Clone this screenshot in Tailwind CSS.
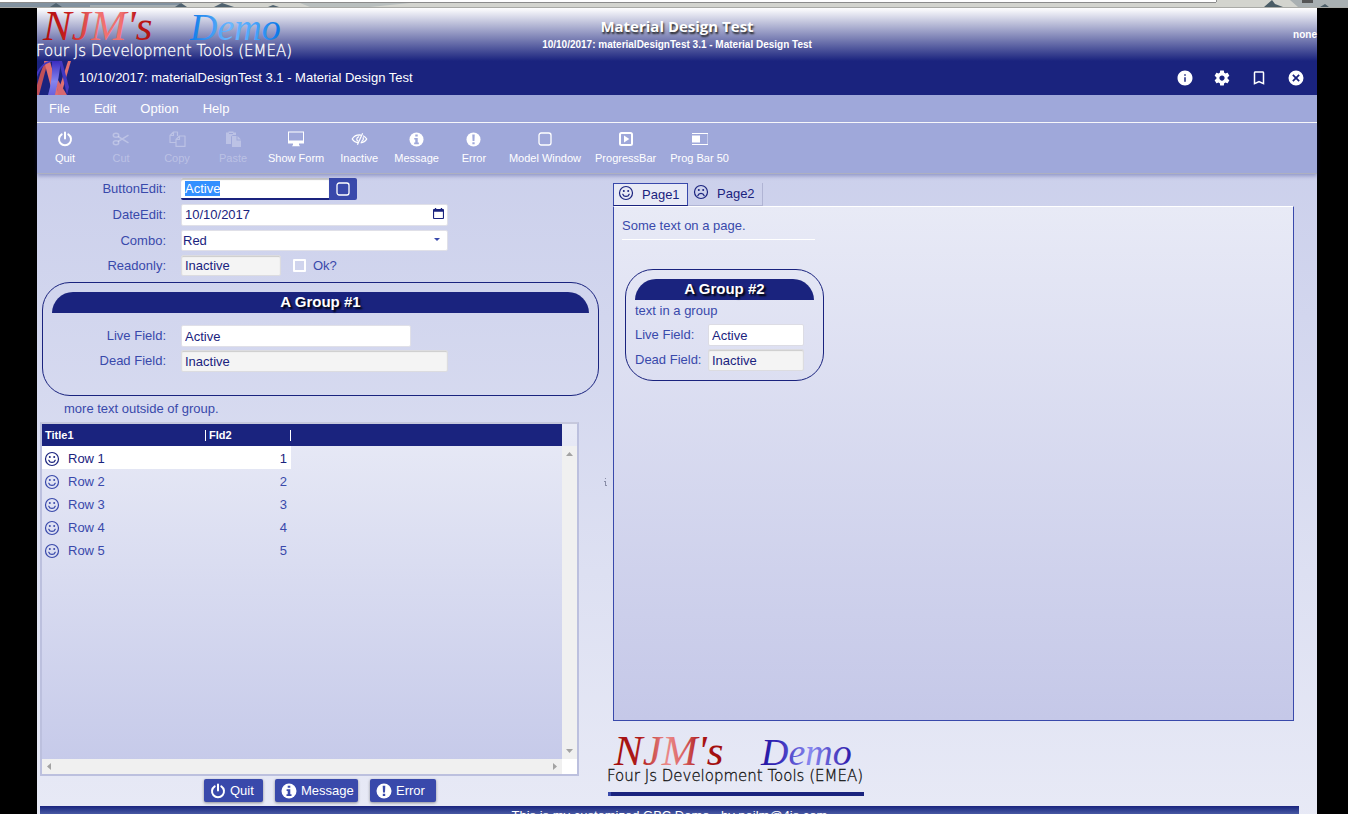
<!DOCTYPE html>
<html lang="en">
<head>
<meta charset="utf-8">
<title>Material Design Test</title>
<script src="https://cdn.jsdelivr.net/npm/@tailwindcss/browser@4"></script>
</head>
<body class="flex h-screen flex-col overflow-hidden bg-black font-['Liberation_Sans',Arial,sans-serif] text-[13px] leading-4 text-[#3949ab]">
<svg class="absolute size-0" aria-hidden="true">
  <defs>
    <linearGradient id="redA" x1="0" x2="1"><stop offset="0" stop-color="#b00c0c"/><stop offset=".25" stop-color="#c82020"/><stop offset=".5" stop-color="#f07070"/><stop offset=".72" stop-color="#f07070"/><stop offset=".85" stop-color="#c01818"/><stop offset="1" stop-color="#b01010"/></linearGradient>
    <linearGradient id="blueA" x1="0" x2="1"><stop offset="0" stop-color="#0a78e8"/><stop offset=".45" stop-color="#6cb8ff"/><stop offset=".7" stop-color="#4aa6fb"/><stop offset="1" stop-color="#0674e6"/></linearGradient>
    <linearGradient id="redB" x1="0" x2="1"><stop offset="0" stop-color="#a00c0c"/><stop offset=".25" stop-color="#b01c1c"/><stop offset=".48" stop-color="#ec8a8a"/><stop offset=".65" stop-color="#d86060"/><stop offset=".8" stop-color="#a81414"/><stop offset="1" stop-color="#a00c0c"/></linearGradient>
    <linearGradient id="blueB" x1="0" x2="1"><stop offset="0" stop-color="#2414a0"/><stop offset=".2" stop-color="#3428b8"/><stop offset=".55" stop-color="#8888f0"/><stop offset="1" stop-color="#2c18a8"/></linearGradient>
    <linearGradient id="ribbon" x1="0" x2="0" y1="0" y2="1"><stop offset="0" stop-color="#3a2cc0"/><stop offset=".6" stop-color="#8484ee"/><stop offset="1" stop-color="#6a62dc"/></linearGradient>
  </defs>
  <symbol id="info" viewBox="0 0 24 24"><path fill="currentColor" d="M12 2C6.48 2 2 6.48 2 12s4.48 10 10 10 10-4.48 10-10S17.52 2 12 2zm1 15h-2v-6h2v6zm0-8h-2V7h2v2z"/></symbol>
  <symbol id="gear" viewBox="0 0 24 24"><path fill="currentColor" d="M19.43 12.98c.04-.32.07-.64.07-.98s-.03-.66-.07-.98l2.11-1.65c.19-.15.24-.42.12-.64l-2-3.46c-.12-.22-.39-.3-.61-.22l-2.49 1c-.52-.4-1.08-.73-1.69-.98l-.38-2.65C14.46 2.18 14.25 2 14 2h-4c-.25 0-.46.18-.49.42l-.38 2.65c-.61.25-1.17.59-1.69.98l-2.49-1c-.23-.09-.49 0-.61.22l-2 3.46c-.13.22-.07.49.12.64l2.11 1.65c-.04.32-.07.65-.07.98s.03.66.07.98l-2.11 1.65c-.19.15-.24.42-.12.64l2 3.46c.12.22.39.3.61.22l2.49-1c.52.4 1.08.73 1.69.98l.38 2.65c.03.24.24.42.49.42h4c.25 0 .46-.18.49-.42l.38-2.65c.61-.25 1.17-.59 1.69-.98l2.49 1c.23.09.49 0 .61-.22l2-3.46c.12-.22.07-.49-.12-.64l-2.11-1.65zM12 15.500c-1.930 0-3.500-1.570-3.500-3.500s1.570-3.500 3.500-3.500 3.500 1.570 3.500 3.500-1.570 3.500-3.500 3.500z"/></symbol>
  <symbol id="bookmark" viewBox="0 0 24 24"><path fill="currentColor" d="M17 3H7c-1.100 0-2 .9-2 2v16l7-3 7 3V5c0-1.100-.9-2-2-2zm0 15l-5-2.180L7 18V5h10v13z"/></symbol>
  <symbol id="cancel" viewBox="0 0 24 24"><path fill="currentColor" fill-rule="evenodd" d="M12 2a10 10 0 1 0 0 20 10 10 0 0 0 0-20zM7 8.600 8.600 7 12 10.300 15.400 7 17 8.600 13.700 12 17 15.400 15.400 17 12 13.700 8.600 17 7 15.400 10.300 12z"/></symbol>
  <symbol id="power" viewBox="0 0 16 16"><path fill="none" stroke="currentColor" stroke-width="2" stroke-linecap="round" d="M4.700 3.300a6 6 0 1 0 6.600 0M8 1.500v6"/></symbol>
  <symbol id="cut" viewBox="0 0 18 16"><g fill="none" stroke="currentColor" stroke-width="1.500"><ellipse cx="4" cy="4.300" rx="2.700" ry="2"/><ellipse cx="4" cy="11.700" rx="2.700" ry="2"/><path d="m6 5.500 10.500 6.300M6 10.500l10.500-6.300"/></g></symbol>
  <symbol id="copy" viewBox="0 0 17 16"><path fill="none" stroke="currentColor" stroke-width="1.200" stroke-linejoin="round" d="M6.500 11.500H1V4.500L4.500 1h4v4M4.500 1v3.500H1M7 8.500 10.500 5h5.500v10.400H7zM10.500 5v3.500H7"/></symbol>
  <symbol id="paste" viewBox="0 0 17 16"><path fill="currentColor" fill-rule="evenodd" d="M1 1.500h2.500V.5h5v1H11V4H8.500C7 4 6 5 6 6.500V13H1zM4 2v1h4V2zM7 5h4.500v4.500H16V16H7zM12.500 5 16 8.500h-3.500z"/></symbol>
  <symbol id="desktop" viewBox="0 0 18 16"><path fill="currentColor" fill-rule="evenodd" d="M1 .5h16v12H1zM2 1.500v8h14v-8zM6 12.500h6v1.200l1 1.500H5l1-1.500z"/></symbol>
  <symbol id="eyeoff" viewBox="0 0 18 14"><g fill="none" stroke="currentColor" stroke-width="1.300"><path d="M7.500 11.200C4.500 10.500 2.300 8.800 1.300 7c1.700-2.800 4.500-4.300 7.700-4.300l1.500.2M12.800 3.600c1.700.8 3 2 3.900 3.400-1.400 2.300-3.700 3.800-6.500 4.200M12.300 1 6.800 13"/><path d="M7.800 9.500C5.500 8.500 5.300 5.500 8.500 4.500M12.800 5.200c.6 2-.3 3.800-2 4.400"/></g></symbol>
  <symbol id="infoB" viewBox="0 0 16 16"><circle cx="8" cy="8" r="7.500" fill="currentColor"/><path fill="var(--hole)" d="M6.700 2.700h2.600v2H6.700zM5.600 6.300h3.700v5h1.200V13h-5v-1.700h1.200V8H5.600z"/></symbol>
  <symbol id="excl" viewBox="0 0 16 16"><circle cx="8" cy="8" r="7.500" fill="currentColor"/><path fill="var(--hole)" d="M6.700 2.700h2.600L9 9.500H7zM6.800 10.800h2.400v2.300H6.800z"/></symbol>
  <symbol id="square" viewBox="0 0 14 14"><rect x="1" y="1" width="12" height="12" rx="2.200" fill="none" stroke="currentColor" stroke-width="1.300"/></symbol>
  <symbol id="play" viewBox="0 0 14 14"><rect x="1" y="1" width="12" height="12" rx="1.500" fill="none" stroke="currentColor" stroke-width="2"/><path fill="currentColor" d="M5 3.500v7L10.300 7z"/></symbol>
  <symbol id="bar50" viewBox="0 0 16 12"><path fill="currentColor" d="M0 0h16v1H0zM0 11h16v1H0zM0 2.500h8v7H0z"/><path fill="currentColor" opacity=".4" d="M15 1h1v10h-1z"/></symbol>
  <symbol id="smile" viewBox="0 0 16 16"><g fill="none" stroke="currentColor" stroke-width="1.200"><circle cx="8" cy="8" r="6.500"/><path d="M4.800 9.200c1 3 5.400 3 6.400 0" stroke-linecap="round"/></g><circle cx="5.800" cy="6" r="1" fill="currentColor"/><circle cx="10.200" cy="6" r="1" fill="currentColor"/></symbol>
  <symbol id="frown" viewBox="0 0 16 16"><g fill="none" stroke="currentColor" stroke-width="1.200"><circle cx="8" cy="8" r="6.500"/><path d="M4.800 11.700c1-3 5.400-3 6.400 0" stroke-linecap="round"/></g><circle cx="5.800" cy="6" r="1" fill="currentColor"/><circle cx="10.200" cy="6" r="1" fill="currentColor"/></symbol>
  <symbol id="calendar" viewBox="0 0 12 12"><path fill="currentColor" fill-rule="evenodd" d="M2 0h1.500v1h5V0H10v1h1c.6 0 1 .4 1 1v9c0 .6-.4 1-1 1H1c-.6 0-1-.4-1-1V2c0-.6.4-1 1-1h1zM1.200 4v6.800h9.600V4z"/></symbol>
</svg>

<svg class="block h-2 w-full shrink-0" viewBox="0 0 1348 8" preserveAspectRatio="none" aria-hidden="true">
  <rect width="1348" height="8" fill="#d3d4ce"/>
  <path fill="#8292a0" d="M0 3h180v4H0z"/><path fill="#a3adb2" d="M90 5h90v2H90z"/><path fill="#b9bfbe" d="M300 3h110l-40 4h-60z"/>
  <path fill="#4f626f" d="m50 7 6-4 6 4zM175 7l6-4 6 4zM214 7l8-4 12 4zM268 7l5-2 6 2z"/>
  <path fill="#a9b0b2" d="M1290 0h58v7h-50z"/><path fill="#4a5c66" d="m1264 7 8-7 3 4 8 3zM1320 7l5-3 4 3z"/><path fill="#555" d="M1302 0h11v3h-11z"/>
  <path fill="#fff" d="M0 0h1216v2H0z"/><path fill="#8c8c8c" d="M0 2h1216v1H0zM1216 0h1v2h-1z"/><path fill="#a9aaa6" d="M0 7h1348v1H0z"/>
</svg>

<div class="mr-[31px] ml-[37px] flex flex-col bg-linear-to-b from-[#c5cae9] to-[#e8eaf6]">
  <header>
    <div class="grid h-[53px] grid-cols-[1fr_auto_1fr] bg-linear-to-b/srgb from-white to-[#1a237e] font-bold text-white">
      <svg class="h-[53px] w-[262px]" viewBox="0 0 262 53" role="img" aria-label="NJM's Demo logo">
        <text x="6" y="32" font-family="'Liberation Serif',serif" font-style="italic" font-weight="400" font-size="43" fill="url(#redA)">NJM's</text>
        <text x="153" y="32" font-family="'Liberation Serif',serif" font-style="italic" font-weight="400" font-size="38" fill="url(#blueA)">Demo</text>
        <text x="-1" y="48" font-family="'DejaVu Sans',sans-serif" font-weight="200" font-size="15" fill="#fff" stroke="#fff" stroke-width=".3">Four Js Development Tools (EMEA)</text>
      </svg>
      <div class="flex flex-col items-center pt-1.5 text-center">
        <h1 class="font-['Open_Sans',sans-serif] text-[15px] leading-6 [text-shadow:1px_2px_2px_#222]">Material Design Test</h1>
        <p class="text-[10px] leading-[14px]">10/10/2017: materialDesignTest 3.1 - Material Design Test</p>
      </div>
      <p class="self-center justify-self-end text-[10px] leading-3">none</p>
    </div>
    <div class="flex h-[34px] items-center bg-[#1a237e] text-white">
      <svg class="mr-2 h-[34px] w-[34px]" viewBox="0 0 34 34" aria-hidden="true">
        <path fill="#c05058" d="M0 24Q3 12 8 0h3L2 34H0z"/>
        <path fill="#e07070" d="M7 0h6l9 34h-6z"/>
        <path fill="#4338c0" d="M0 11Q6 1 12 0h4L9 3Q4 6 0 16z"/>
        <path fill="#e07070" d="M31 0h3L24 34h-4z"/>
        <path fill="#d86870" d="M18 14l12 20h-9z"/>
        <path fill="url(#ribbon)" d="M15 0h9q-2 17-6 34h-7q5-17 4-34z"/>
        <path fill="#4338c0" d="M22 0h3l7 26-2 8z"/>
      </svg>
      <p class="flex-1">10/10/2017: materialDesignTest 3.1 - Material Design Test</p>
      <nav class="mr-2 flex gap-[11px]" aria-label="Application">
        <button class="flex w-[26px] justify-center" aria-label="About"><svg class="size-[18px]"><use href="#info"/></svg></button>
        <button class="flex w-[26px] justify-center" aria-label="Settings"><svg class="size-[18px]"><use href="#gear"/></svg></button>
        <button class="flex w-[26px] justify-center" aria-label="Bookmark"><svg class="size-[18px]"><use href="#bookmark"/></svg></button>
        <button class="flex w-[26px] justify-center" aria-label="Close"><svg class="size-[18px]"><use href="#cancel"/></svg></button>
      </nav>
    </div>
    <nav class="flex h-7 items-center border-b border-white bg-[#9fa8da] text-white" aria-label="Menu">
      <button class="px-3">File</button><button class="px-3">Edit</button><button class="px-3">Option</button><button class="px-3">Help</button>
    </nav>
    <div class="relative flex h-[51px] border-b border-[#adb0c0] bg-[#9fa8da] pt-2 text-[11px] text-white shadow-[0_2px_4px_#1a237e55] [--hole:#9fa8da]" role="toolbar" aria-label="Actions">
      <button class="flex min-w-14 flex-col items-center gap-[3px] px-[7px]"><svg class="size-4"><use href="#power"/></svg>Quit</button>
      <button class="flex min-w-14 flex-col items-center gap-[3px] px-[7px] text-white/30" disabled><svg class="h-4 w-[18px]"><use href="#cut"/></svg>Cut</button>
      <button class="flex min-w-14 flex-col items-center gap-[3px] px-[7px] text-white/30" disabled><svg class="h-4 w-[17px]"><use href="#copy"/></svg>Copy</button>
      <button class="flex min-w-14 flex-col items-center gap-[3px] px-[7px] text-white/30" disabled><svg class="h-4 w-[17px]"><use href="#paste"/></svg>Paste</button>
      <button class="flex min-w-14 flex-col items-center gap-[3px] px-[7px]"><svg class="h-4 w-[18px]"><use href="#desktop"/></svg>Show Form</button>
      <button class="flex min-w-14 flex-col items-center gap-[3px] px-[7px]"><svg class="h-4 w-[17px]"><use href="#eyeoff"/></svg>Inactive</button>
      <button class="flex min-w-14 flex-col items-center gap-[3px] px-[7px]"><span class="flex h-4 items-center"><svg class="size-[15px]"><use href="#infoB"/></svg></span>Message</button>
      <button class="flex min-w-14 flex-col items-center gap-[3px] px-[7px]"><span class="flex h-4 items-center"><svg class="size-[15px]"><use href="#excl"/></svg></span>Error</button>
      <button class="flex min-w-14 flex-col items-center gap-[3px] px-[7px]"><span class="flex h-4 items-center"><svg class="size-[14px]"><use href="#square"/></svg></span>Model Window</button>
      <button class="flex min-w-14 flex-col items-center gap-[3px] px-[7px]"><span class="flex h-4 items-center"><svg class="size-[14px]"><use href="#play"/></svg></span>ProgressBar</button>
      <button class="flex min-w-14 flex-col items-center gap-[3px] px-[7px]"><span class="flex h-4 items-center"><svg class="h-3 w-4"><use href="#bar50"/></svg></span>Prog Bar 50</button>
    </div>
  </header>

  <main class="flex">
    <section class="w-[562px] shrink-0 pt-1">
      <form>
        <div class="grid grid-cols-[129px_1fr] items-center gap-x-[15px] gap-y-1">
          <label class="text-right" for="be">ButtonEdit:</label>
          <div class="flex h-[22px]">
            <input id="be" class="h-[22px] w-[148px] rounded-l-xs border-b-2 border-[#1a237e] bg-white pl-1 text-[#1a237e] caret-transparent shadow-[inset_0_2px_1px_#c8c8c8] outline-none selection:bg-[#3390ff] selection:text-white" value="Active" autofocus>
            <button type="button" class="flex w-7 items-center justify-center rounded-r-xs bg-[#3949ab] text-white" aria-label="Pick"><svg class="size-[14px]"><use href="#square"/></svg></button>
          </div>
          <label class="text-right" for="de">DateEdit:</label>
          <div class="flex h-[22px] w-[267px] items-center rounded-xs border border-[#e0e0e8] bg-white pr-px">
            <input id="de" class="min-w-0 flex-1 pl-[3px] text-[#1a237e] outline-none" value="10/10/2017">
            <button type="button" class="mb-1 px-0.5 text-[#1a237e]" aria-label="Open calendar"><svg class="size-[11px]"><use href="#calendar"/></svg></button>
          </div>
          <label class="text-right" for="co">Combo:</label>
          <div class="relative w-[267px]">
            <select id="co" class="block h-[21px] w-full appearance-none rounded-xs border border-[#e0e0e8] bg-white pl-px text-[#1a237e] outline-none"><option>Red</option></select>
            <svg class="pointer-events-none absolute top-2 right-2 h-[3px] w-[6px]" viewBox="0 0 6 3"><path fill="#3949ab" d="M0 0h6L3 3z"/></svg>
          </div>
          <label class="text-right" for="ro">Readonly:</label>
          <div class="flex h-[21px] items-center">
            <input id="ro" class="h-[21px] w-[100px] rounded-xs border border-[#dcdce0] bg-[#f4f4f4] pl-[3px] text-[#1a237e] shadow-[inset_0_1px_1px_#ccc]" value="Inactive" readonly>
            <label class="ml-3 flex items-center gap-[7px]"><input type="checkbox" class="size-[13px] appearance-none rounded-[1px] border-2 border-white">Ok?</label>
          </div>
        </div>
        <fieldset class="mt-1.5 ml-[5px] flex h-[114px] w-[557px] flex-col rounded-[28px] border border-[#1a237e] px-[9px] pt-[9px]">
          <h2 class="h-[21px] rounded-t-[21px] bg-[#1a237e] text-center text-[15px] leading-5 font-bold text-white [text-shadow:2px_2px_2px_#000]">A Group #1</h2>
          <div class="mt-3 grid grid-cols-[114px_1fr] items-center gap-x-[15px] gap-y-[3px]">
            <label class="text-right" for="l1">Live Field:</label>
            <input id="l1" class="h-[22px] w-[230px] rounded-xs border border-[#e0e0e8] bg-white pl-[3px] text-[#1a237e]" value="Active">
            <label class="text-right" for="d1">Dead Field:</label>
            <input id="d1" class="h-[22px] w-[267px] rounded-xs border border-[#dcdce0] bg-[#f4f4f4] pl-[3px] text-[#1a237e] shadow-[inset_0_1px_1px_#ccc]" value="Inactive" readonly>
          </div>
        </fieldset>
        <p class="mt-[5px] ml-[27px]">more text outside of group.</p>
      </form>

      <div class="mt-[5px] ml-[3px] grid h-[354px] w-[539px] grid-cols-[1fr_15px] grid-rows-[22px_1fr_15px] border-2 border-[#bcc0de] border-t-[#c6c8dc] bg-linear-to-b from-[#e8eaf6] to-[#c5c9e9]">
        <table class="col-start-1 row-span-2 row-start-1 w-full table-fixed self-start text-left">
          <colgroup><col class="w-[164px]"><col class="w-[85px]"><col></colgroup>
          <thead><tr class="h-[22px] bg-[#1a237e] text-[11px] leading-[11px] text-white">
            <th class="pl-[3px]"><span class="block border-r border-white">Title1</span></th>
            <th class="pl-[3px]"><span class="block border-r border-white">Fld2</span></th><th></th></tr></thead>
          <tbody>
            <tr class="h-[23px] text-[#1a237e]"><td class="bg-white pt-0.5 pl-0.5"><span class="flex items-center gap-2"><svg class="size-4"><use href="#smile"/></svg>Row 1</span></td><td class="bg-white pt-0.5 pr-1 text-right">1</td><td></td></tr>
            <tr class="h-[23px]"><td class="pt-0.5 pl-0.5"><span class="flex items-center gap-2"><svg class="size-4"><use href="#smile"/></svg>Row 2</span></td><td class="pt-0.5 pr-1 text-right">2</td><td></td></tr>
            <tr class="h-[23px]"><td class="pt-0.5 pl-0.5"><span class="flex items-center gap-2"><svg class="size-4"><use href="#smile"/></svg>Row 3</span></td><td class="pt-0.5 pr-1 text-right">3</td><td></td></tr>
            <tr class="h-[23px]"><td class="pt-0.5 pl-0.5"><span class="flex items-center gap-2"><svg class="size-4"><use href="#smile"/></svg>Row 4</span></td><td class="pt-0.5 pr-1 text-right">4</td><td></td></tr>
            <tr class="h-[23px]"><td class="pt-0.5 pl-0.5"><span class="flex items-center gap-2"><svg class="size-4"><use href="#smile"/></svg>Row 5</span></td><td class="pt-0.5 pr-1 text-right">5</td><td></td></tr>
          </tbody>
        </table>
        <div class="col-start-2 row-start-2 flex flex-col items-center justify-between bg-[#f0f0f0] py-1.5">
          <svg class="h-1 w-[7px]" viewBox="0 0 7 4"><path fill="#a3a3a3" d="M0 4h7L3.500 0z"/></svg>
          <svg class="h-1 w-[7px]" viewBox="0 0 7 4"><path fill="#a3a3a3" d="M0 0h7L3.500 4z"/></svg>
        </div>
        <div class="col-start-1 row-start-3 flex items-center justify-between bg-[#f0f0f0] px-[5px]">
          <svg class="h-[7px] w-1" viewBox="0 0 4 7"><path fill="#a3a3a3" d="M4 0v7L0 3.500z"/></svg>
          <svg class="h-[7px] w-1" viewBox="0 0 4 7"><path fill="#a3a3a3" d="M0 0v7l4-3.500z"/></svg>
        </div>
        <div class="col-start-2 row-start-3 bg-white"></div>
      </div>

      <div class="mt-[3px] mb-1 ml-[167px] flex gap-3 text-white [--hole:#3949ab]">
        <button class="flex h-[23px] w-[59px] items-center gap-1 rounded-xs bg-[#3949ab] pt-px pl-1.5 shadow-[0_1px_3px_#0006]"><svg class="size-4"><use href="#power"/></svg>Quit</button>
        <button class="flex h-[23px] w-[83px] items-center gap-1 rounded-xs bg-[#3949ab] pt-px pl-1.5 shadow-[0_1px_3px_#0006]"><svg class="size-4"><use href="#infoB"/></svg>Message</button>
        <button class="flex h-[23px] w-[66px] items-center gap-1 rounded-xs bg-[#3949ab] pt-px pl-1.5 shadow-[0_1px_3px_#0006]"><svg class="size-4"><use href="#excl"/></svg>Error</button>
      </div>
    </section>

    <div class="flex w-3 items-center justify-center pb-4" aria-hidden="true"><svg class="h-2 w-[3px]" viewBox="0 0 3 8"><path fill="#8a8ea8" d="M1 0h1v1H1zM0 3h2v4H1V4H0zM1 7h2v1H1z"/></svg></div>

    <section class="mr-[23px] ml-0.5 flex min-w-0 flex-1 flex-col pt-[9px] text-[#3949ab]">
      <div class="flex text-[#1a237e]" role="tablist">
        <button role="tab" aria-selected="true" class="flex h-[23px] w-[75px] items-center gap-2 border border-[#3949ab] border-b-[#1a237e] bg-[#e8eaf6] pl-1"><svg class="mb-1 size-4"><use href="#smile"/></svg>Page1</button>
        <button role="tab" aria-selected="false" class="flex h-[23px] w-[75px] items-center gap-2 border-r border-b border-[#b0b4d4] pl-[5px]"><svg class="mb-1 size-4"><use href="#frown"/></svg>Page2</button>
      </div>
      <div role="tabpanel" class="flex-1 border border-[#3949ab] border-t-white bg-linear-to-b from-[#e8eaf6] to-[#c5c8e8] pl-2">
        <p class="w-[193px] border-b border-white pt-[11px] pb-[5px]">Some text on a page.</p>
        <fieldset class="mt-[29px] ml-[3px] w-[199px] rounded-[28px] border border-[#1a237e] px-[9px] pt-[9px] pb-[9px]">
          <h2 class="h-[21px] rounded-t-[21px] bg-[#1a237e] text-center text-[15px] leading-5 font-bold text-white [text-shadow:2px_2px_2px_#000]">A Group #2</h2>
          <p class="mt-[3px] mb-[5px]">text in a group</p>
          <div class="grid grid-cols-[73px_96px] items-center gap-y-[3px]">
            <label for="l2">Live Field:</label>
            <input id="l2" class="h-[22px] w-full rounded-xs border border-[#dcdce4] bg-white pl-[3px] text-[#1a237e]" value="Active">
            <label for="d2">Dead Field:</label>
            <input id="d2" class="h-[22px] w-full rounded-xs border border-[#dcdce0] bg-[#f4f4f4] pl-[3px] text-[#1a237e] shadow-[inset_0_1px_1px_#ccc]" value="Inactive" readonly>
          </div>
        </fieldset>
      </div>
      <div class="mt-3 -ml-[5px] mb-[10px] w-[262px]">
        <svg class="block h-[53px] w-[262px]" viewBox="0 0 262 53" role="img" aria-label="NJM's Demo logo">
          <text x="6" y="32" font-family="'Liberation Serif',serif" font-style="italic" font-size="43" fill="url(#redB)">NJM's</text>
          <text x="153" y="32" font-family="'Liberation Serif',serif" font-style="italic" font-size="38" fill="url(#blueB)">Demo</text>
          <text x="-1" y="48" font-family="'DejaVu Sans',sans-serif" font-weight="200" font-size="15" fill="#111" stroke="#111" stroke-width=".3">Four Js Development Tools (EMEA)</text>
        </svg>
        <div class="mt-1.5 h-1 w-64 border-l-3 border-[#3949ab] bg-[#1a237e]"></div>
      </div>
    </section>
  </main>

  <footer class="mr-[18px] ml-[3px] bg-linear-to-b from-[#1a237e] to-[#9fa8da] py-0.5 text-center text-white">This is my customized GBC Demo - by neilm@4js.com</footer>
</div>
<script>
  const field = document.getElementById('be');
  field.focus();
  field.select();
</script>
</body>
</html>
